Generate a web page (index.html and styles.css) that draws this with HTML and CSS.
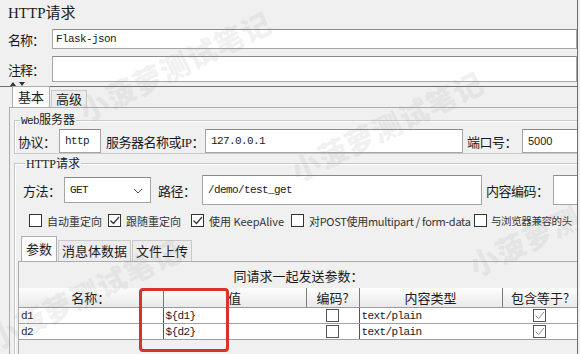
FILE: index.html
```html
<!DOCTYPE html>
<html>
<head>
    <title>HTTP请求</title>
    <meta charset="utf-8">
    <link rel="stylesheet" href="styles.css">
</head>
<body>
    <div class="window">
        <div class="title">HTTP请求</div>

        <div class="field-row">
            <label>名称：</label>
            <div class="input">Flask-json</div>
        </div>
        <div class="field-row comment">
            <label>注释：</label>
            <div class="input tall"></div>
        </div>

        <div class="splitter">
            <span class="arrow up"></span><span class="arrow down"></span>
        </div>

        <div class="tabs outer">
            <div class="tab-strip">
                <span class="tab active">基本</span>
                <span class="tab">高级</span>
            </div>
            <div class="tab-panel">
                <fieldset class="group">
                    <legend><span class="mono">Web</span>服务器</legend>
                    <div class="form-line web-line">
                        <span class="lbl lbl-proto">协议：</span>
                        <div class="box box-proto mono">http</div>
                        <span class="lbl lbl-server">服务器名称或<span class="serif">IP</span>：</span>
                        <div class="box box-server mono">127.0.0.1</div>
                        <span class="lbl lbl-port">端口号：</span>
                        <div class="box box-port sans">5000</div>
                    </div>
                </fieldset>

                <fieldset class="group req">
                    <legend><span class="serif">HTTP</span>请求</legend>
                    <div class="form-line req-line">
                        <span class="lbl lbl-method">方法：</span>
                        <div class="box box-method mono">
                            GET
                            <svg class="chevron" width="10" height="6" viewBox="0 0 10 6"><polyline points="1,1 5,5 9,1" fill="none" stroke="#555" stroke-width="1"/></svg>
                        </div>
                        <span class="lbl lbl-path">路径：</span>
                        <div class="box box-path mono">/demo/test_get</div>
                        <span class="lbl lbl-enc">内容编码：</span>
                        <div class="box box-enc"></div>
                    </div>

                    <div class="checks">
                        <span class="check c1"><span class="cb"></span>自动重定向</span>
                        <span class="check c2"><span class="cb"><svg width="11" height="11" viewBox="0 0 11 11"><polyline points="1.5,5.5 4.5,8.5 10,2" fill="none" stroke="#333" stroke-width="1.2"/></svg></span>跟随重定向</span>
                        <span class="check c3"><span class="cb"><svg width="11" height="11" viewBox="0 0 11 11"><polyline points="1.5,5.5 4.5,8.5 10,2" fill="none" stroke="#333" stroke-width="1.2"/></svg></span>使用 KeepAlive</span>
                        <span class="check c4"><span class="cb"></span>对POST使用multipart / form-data</span>
                        <span class="check c5"><span class="cb"></span>与浏览器兼容的头</span>
                    </div>

                    <div class="tabs inner">
                        <div class="tab-strip">
                            <span class="tab active">参数</span>
                            <span class="tab">消息体数据</span>
                            <span class="tab">文件上传</span>
                        </div>
                        <div class="tab-panel params">
                            <div class="caption">同请求一起发送参数：</div>
                            <table class="param-table">
                                <colgroup>
                                    <col style="width:144px"><col style="width:143px"><col style="width:53px"><col style="width:143px"><col style="width:76px">
                                </colgroup>
                                <thead>
                                    <tr><th>名称：</th><th>值</th><th>编码?</th><th>内容类型</th><th>包含等于?</th></tr>
                                </thead>
                                <tbody>
                                    <tr>
                                        <td>d1</td>
                                        <td class="val">${d1}</td>
                                        <td class="center"><span class="cb small"></span></td>
                                        <td class="val">text/plain</td>
                                        <td class="center"><span class="cb small"><svg width="11" height="11" viewBox="0 0 11 11"><polyline points="1.5,5.5 4.5,8.5 10,2" fill="none" stroke="#888" stroke-width="1"/></svg></span></td>
                                    </tr>
                                    <tr>
                                        <td>d2</td>
                                        <td class="val">${d2}</td>
                                        <td class="center"><span class="cb small"></span></td>
                                        <td class="val">text/plain</td>
                                        <td class="center"><span class="cb small"><svg width="11" height="11" viewBox="0 0 11 11"><polyline points="1.5,5.5 4.5,8.5 10,2" fill="none" stroke="#888" stroke-width="1"/></svg></span></td>
                                    </tr>
                                </tbody>
                            </table>
                        </div>
                    </div>
                </fieldset>
            </div>
        </div>

        <!-- red highlight over the value column -->
        <div class="highlight"></div>

        <!-- watermark -->
        <div class="watermark w1">小菠萝测试笔记</div>
        <div class="watermark w2">小菠萝测试笔记</div>
        <div class="watermark w3">小菠萝测试笔记</div>
        <div class="watermark w4">小菠萝测试笔记</div>
    </div>
</body>
</html>
```

FILE: styles.css
```css
body {
    margin: 0;
    background-color: #f0f0f0;
    font-family: "Noto Sans CJK SC", sans-serif;
    font-size: 13px;
    color: #1a1a1a;
    overflow: hidden;
}

.window {
    position: relative;
    width: 577px;
    height: 354px;
    border-right: 1px solid #6d6d6d;
    overflow: hidden;
}

.mono {
    font-family: "Liberation Mono", "Noto Sans CJK SC", monospace;
    font-size: 11px;
    letter-spacing: -0.6px;
}

.serif {
    font-family: "Liberation Serif", serif;
}

.sans {
    font-family: "Liberation Sans", sans-serif;
    font-size: 11px;
}

.title {
    height: 26px;
    padding-left: 8px;
    font-family: "Liberation Serif", "Noto Sans CJK SC", serif;
    font-size: 15px;
    line-height: 26px;
}

.field-row {
    display: flex;
    align-items: center;
    margin-top: 3px;
}

.field-row.comment {
    margin-top: 7px;
}

.field-row label {
    width: 52px;
    padding-left: 8px;
    box-sizing: border-box;
    flex: none;
    white-space: nowrap;
    letter-spacing: -1px;
}

.input {
    flex: 1;
    height: 20px;
    box-sizing: border-box;
    background-color: #fff;
    border: 1px solid #a5a5a5;
    border-top-color: #8a8a8a;
    padding-left: 3px;
    font-family: "Liberation Mono", monospace;
    font-size: 11px;
    letter-spacing: -0.6px;
    line-height: 18px;
}

.input.tall {
    height: 26px;
}

.splitter {
    height: 4px;
    border-bottom: 1px solid #6f6f6f;
    padding-left: 10px;
    display: flex;
    gap: 3px;
    align-items: flex-start;
}

.arrow {
    width: 0;
    height: 0;
    border-left: 3px solid transparent;
    border-right: 3px solid transparent;
}

.arrow.up {
    border-bottom: 4px solid #333;
}

.arrow.down {
    border-top: 4px solid #333;
}

/* tabs */
.tabs.outer {
    margin-left: 9px;
    width: 620px;
}

.tab-strip {
    display: flex;
    align-items: flex-end;
    height: 20px;
    padding-left: 3px;
}

.tab {
    height: 16px;
    line-height: 16px;
    padding: 0 4px;
    border: 1px solid #c9c9c9;
    border-bottom: none;
    background-color: #ececec;
    margin-right: 1px;
    white-space: nowrap;
}

.tab.active {
    height: 20px;
    line-height: 20px;
    padding: 0 5px;
    background-color: #fbfbfb;
    border-color: #adadad;
}

.tab-panel {
    border-top: 1px solid #adadad;
    border-left: 1px solid #adadad;
    padding: 4px 0 0 4px;
}

.group {
    margin: 0;
    padding: 0 0 0 3px;
    min-width: 0;
    border: 1px solid #c8c8c8;
    border-right: none;
    box-shadow: inset 1px 1px 0 #fff;
}

.group legend {
    padding: 0 1px;
    margin-left: 2px;
    font-size: 12px;
    line-height: 14px;
}

.group legend .mono {
    font-size: 11px;
}

.group.req {
    margin-top: 2px;
    padding-left: 8px;
}

.form-line {
    display: flex;
    align-items: center;
    white-space: nowrap;
}

.web-line {
    margin-top: 1px;
    height: 24px;
}

.req-line {
    margin-top: 4px;
    height: 30px;
}

.lbl {
    flex: none;
    white-space: nowrap;
    letter-spacing: -0.5px;
}

.box {
    flex: none;
    box-sizing: border-box;
    background-color: #fff;
    border: 1px solid #a5a5a5;
    border-top-color: #8a8a8a;
    padding-left: 5px;
    display: flex;
    align-items: center;
}

.lbl-proto { width: 41px; }
.box-proto { width: 42px; height: 24px; }
.lbl-server { width: 99px; margin-left: 5px; }
.box-server { width: 258px; height: 24px; }
.lbl-port { width: 55px; margin-left: 4px; }
.box-port { width: 80px; height: 24px; }

.lbl-method { width: 41px; }
.box-method { width: 87px; height: 26px; position: relative; }
.chevron { position: absolute; right: 7px; top: 10px; }
.lbl-path { width: 39px; margin-left: 7px; }
.box-path { width: 280px; height: 30px; margin-left: 5px; }
.lbl-enc { width: 67px; margin-left: 4px; }
.box-enc { width: 60px; height: 30px; }

.checks {
    display: flex;
    align-items: center;
    margin-top: 9px;
    padding-left: 6px;
    height: 13px;
    font-size: 11px;
    color: #333;
}

.check {
    display: flex;
    align-items: center;
    gap: 5px;
    flex: none;
    white-space: nowrap;
}

.c1 { width: 79px; }
.c2 { width: 83px; }
.c3 { width: 100px; }
.c4 { width: 183px; letter-spacing: -0.3px; }
.c5 { gap: 4px; font-size: 10.5px; letter-spacing: -0.4px; }

.cb {
    width: 13px;
    height: 13px;
    box-sizing: border-box;
    border: 1px solid #333;
    background-color: #fff;
    display: inline-flex;
    align-items: center;
    justify-content: center;
    flex: none;
}

.cb.small {
    border-color: #555;
}

/* inner tabs */
.tabs.inner {
    margin: 10px 0 0 -5px;
}

.tabs.inner .tab-strip {
    height: 24px;
}

.tabs.inner .tab {
    height: 20px;
    line-height: 20px;
    padding: 0 3px;
}

.tabs.inner .tab.active {
    height: 24px;
    line-height: 24px;
    padding: 0 4px;
}

.tab-panel.params {
    padding: 5px 0 0 0;
    height: 100px;
}

.caption {
    width: 559px;
    text-align: center;
    line-height: 18px;
}

.param-table {
    margin-top: 3px;
    width: 559px;
    table-layout: fixed;
    border-collapse: collapse;
}

.param-table th {
    height: 19px;
    padding: 0;
    font-weight: normal;
    background: linear-gradient(#fdfdfd, #e9e9e9);
    border-right: 1px solid #7a7a7a;
    border-bottom: 1px solid #9a9a9a;
    text-align: center;
    line-height: 18px;
    white-space: nowrap;
}

.param-table td {
    height: 15px;
    padding: 0 0 0 2px;
    background-color: #fff;
    border-bottom: 1px solid #a0a0a0;
    font-family: "Liberation Mono", monospace;
    font-size: 11px;
    letter-spacing: -0.6px;
    line-height: 14px;
}

.param-table td.val {
    border-left: 1px solid #555;
}

.param-table td.center {
    text-align: center;
    padding: 0;
}

.param-table td:last-child {
    border-right: 1px solid #7a7a7a;
}

.param-table .cb {
    vertical-align: middle;
}

.highlight {
    position: absolute;
    left: 139px;
    top: 288px;
    width: 90px;
    height: 64px;
    box-sizing: border-box;
    border: 3px solid #d8332b;
    border-radius: 4px;
}

.watermark {
    position: absolute;
    pointer-events: none;
    white-space: nowrap;
    font-family: "Noto Sans CJK SC", sans-serif;
    font-weight: 900;
    font-size: 29px;
    letter-spacing: 1px;
    color: rgba(150, 150, 150, 0.14);
    transform: rotate(-26deg);
    transform-origin: left center;
}

.w1 { left: 80px; top: 90px; }
.w2 { left: 292px; top: 150px; }
.w3 { left: -10px; top: 318px; }
.w4 { left: 470px; top: 245px; }
```
